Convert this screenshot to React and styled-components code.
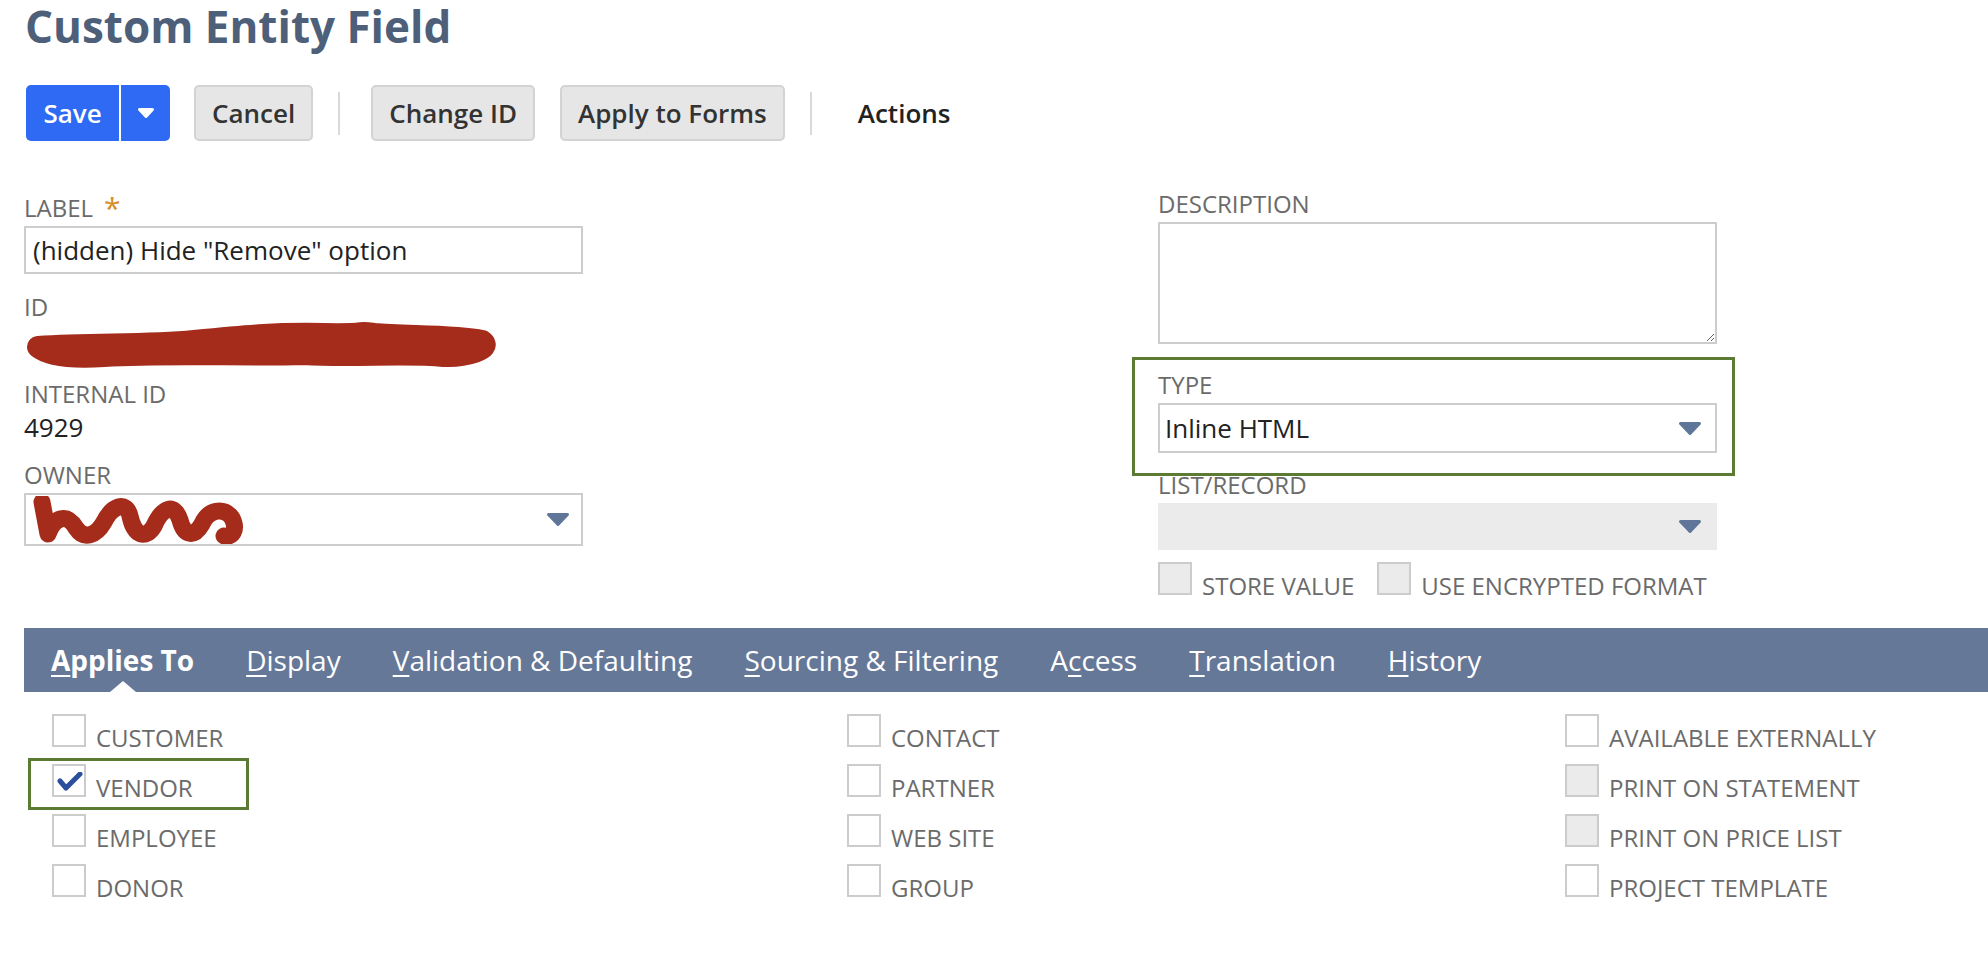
import React from "react";
import styled, { createGlobalStyle } from "styled-components";

const GlobalStyle = createGlobalStyle`
  html, body {
    margin: 0;
    padding: 0;
    background: #fff;
  }
  body {
    font-family: "Open Sans", "Liberation Sans", sans-serif;
    color: #262626;
  }
`;

const Page = styled.div`
  width: 1988px;
  box-sizing: border-box;
  padding-left: 24px;
  padding-bottom: 40px;
`;

const Title = styled.h1`
  margin: 0;
  padding-left: 1px;
  font-size: 44px;
  line-height: 52px;
  font-weight: 700;
  color: #4d5f79;
`;

const Toolbar = styled.div`
  display: flex;
  align-items: center;
  margin-top: 33px;
  padding-left: 2px;
  height: 56px;
`;

const SplitButton = styled.div`
  display: flex;
  height: 56px;
  border-radius: 5px;
  background: #2e6af3;
  color: #fff;
  overflow: hidden;
  margin-right: 24px;
`;

const SplitMain = styled.div`
  width: 93px;
  display: flex;
  align-items: center;
  justify-content: center;
  font-size: 26px;
  font-weight: 600;
`;

const SplitCaret = styled.div`
  width: 49px;
  border-left: 2px solid #fff;
  display: flex;
  align-items: center;
  justify-content: center;
`;

const GrayButton = styled.div`
  height: 56px;
  box-sizing: border-box;
  padding: 0 16px;
  display: flex;
  align-items: center;
  background: #e6e6e6;
  border: 2px solid #d3d3d3;
  border-radius: 5px;
  font-size: 26px;
  font-weight: 600;
  color: #333;
  margin-right: 25px;
`;

const Divider = styled.div`
  width: 2px;
  height: 43px;
  background: #d9d9d9;
  margin-right: ${(p) => p.$mr}px;
`;

const TextAction = styled.div`
  font-size: 26px;
  font-weight: 600;
  color: #222;
`;

const Form = styled.div`
  display: grid;
  grid-template-columns: 559px 559px;
  column-gap: 575px;
  margin-top: 48px;
`;

const Column = styled.div`
  display: flex;
  flex-direction: column;
  padding-top: ${(p) => p.$pt || 0}px;
`;

const Field = styled.div`
  position: relative;
  margin-bottom: ${(p) => (p.$mb === undefined ? 18 : p.$mb)}px;
`;

const Label = styled.div`
  font-size: 24px;
  line-height: 30px;
  color: #6b6b6b;
  margin-bottom: 3px;
  white-space: nowrap;
`;

const Required = styled.span`
  color: #d88d25;
  font-size: 30px;
  line-height: 20px;
  margin-left: 11px;
  position: relative;
  top: 2px;
`;

const TextInput = styled.div`
  height: 48px;
  box-sizing: border-box;
  border: 2px solid #cdcdcd;
  padding: 0 7px;
  display: flex;
  align-items: center;
  font-size: 26px;
  color: #222;
`;

const Value = styled.div`
  font-size: 26px;
  line-height: 30px;
  color: #222;
`;

const Redacted = styled.div`
  height: 42px;
  svg {
    display: block;
    margin-top: -6px;
  }
`;

const Select = styled.div`
  height: ${(p) => p.$h || 50}px;
  box-sizing: border-box;
  border: 2px solid ${(p) => (p.$disabled ? "#ebebeb" : "#cdcdcd")};
  background: ${(p) => (p.$disabled ? "#ebebeb" : "#fff")};
  padding: 0 ${(p) => p.$pr || 12}px 0 5px;
  display: flex;
  align-items: center;
  justify-content: space-between;
  font-size: 26px;
  color: #222;
  position: relative;
  overflow: hidden;
`;

const OwnerScribble = styled.svg`
  position: absolute;
  left: 6px;
  top: 1px;
`;

const TextArea = styled.textarea`
  display: block;
  width: 559px;
  height: 122px;
  box-sizing: border-box;
  border: 2px solid #cdcdcd;
  border-radius: 0;
  resize: both;
  font-family: inherit;
  font-size: 24px;
  outline: none;
`;

const Annotation = styled.div`
  position: absolute;
  left: ${(p) => p.$l}px;
  top: ${(p) => p.$t}px;
  right: ${(p) => p.$r}px;
  bottom: ${(p) => p.$b}px;
  border: 3px solid #5b7b35;
  pointer-events: none;
`;

const InlineChecks = styled.div`
  display: flex;
  gap: 23px;
  margin-top: 12px;
`;

const CheckItem = styled.div`
  position: relative;
  align-self: flex-start;
  display: flex;
  align-items: flex-end;
  gap: 10px;
  height: 33px;
`;

const Box = styled.div`
  width: 34px;
  height: 33px;
  box-sizing: border-box;
  border: 2px solid #cccccc;
  background: ${(p) => (p.$disabled ? "#ebebeb" : "#fff")};
  position: relative;
  flex-shrink: 0;
  svg {
    position: absolute;
    left: 3px;
    top: 6px;
  }
`;

const CheckText = styled.span`
  font-size: 24px;
  line-height: 24px;
  color: #6b6b6b;
  margin-bottom: -3px;
  white-space: nowrap;
`;

const TabBar = styled.div`
  display: flex;
  align-items: center;
  gap: 52px;
  height: 64px;
  margin-top: 33px;
  padding-left: 27px;
  background: #667898;
`;

const Tab = styled.div`
  position: relative;
  height: 64px;
  display: flex;
  align-items: center;
  font-size: 28px;
  font-weight: ${(p) => (p.$active ? 700 : 400)};
  color: #fff;
  white-space: nowrap;
  u {
    text-decoration-thickness: 2px;
    text-underline-offset: 4px;
  }
`;

const TabArrow = styled.div`
  position: absolute;
  bottom: 0;
  left: 50%;
  margin-left: -13px;
  width: 0;
  height: 0;
  border-left: 13px solid transparent;
  border-right: 13px solid transparent;
  border-bottom: 11px solid #fff;
`;

const CheckGrid = styled.div`
  display: grid;
  grid-template-columns: 795px 718px 1fr;
  padding: 22px 0 0 28px;
`;

const CheckColumn = styled.div`
  display: flex;
  flex-direction: column;
  gap: 17px;
`;

const Caret = ({ color = "#5f7699", w = 22, h = 13 }) => (
  <svg width={w} height={h} viewBox={`0 0 ${w} ${h}`}>
    <polygon
      points={`1.5,1.5 ${w - 1.5},1.5 ${w / 2},${h - 1.5}`}
      fill={color}
      stroke={color}
      strokeWidth="3"
      strokeLinejoin="round"
    />
  </svg>
);

const Tick = () => (
  <svg width="26" height="20" viewBox="0 0 26 20">
    <path
      d="M3 9 L9 16 L23 2"
      fill="none"
      stroke="#2b4f9c"
      strokeWidth="5"
      strokeLinecap="round"
      strokeLinejoin="round"
    />
  </svg>
);

const Check = ({ label, checked, disabled, highlight }) => (
  <CheckItem>
    <Box $disabled={disabled}>{checked && <Tick />}</Box>
    <CheckText>{label}</CheckText>
    {highlight && <Annotation $l={-24} $t={-6} $r={-56} $b={-13} />}
  </CheckItem>
);

const tabs = [
  { key: "A", rest: "pplies To", active: true },
  { key: "D", rest: "isplay" },
  { key: "V", rest: "alidation & Defaulting" },
  { key: "S", rest: "ourcing & Filtering" },
  { pre: "A", key: "c", rest: "cess" },
  { key: "T", rest: "ranslation" },
  { key: "H", rest: "istory" },
];

const columns = [
  [
    { label: "CUSTOMER" },
    { label: "VENDOR", checked: true, highlight: true },
    { label: "EMPLOYEE" },
    { label: "DONOR" },
  ],
  [{ label: "CONTACT" }, { label: "PARTNER" }, { label: "WEB SITE" }, { label: "GROUP" }],
  [
    { label: "AVAILABLE EXTERNALLY" },
    { label: "PRINT ON STATEMENT", disabled: true },
    { label: "PRINT ON PRICE LIST", disabled: true },
    { label: "PROJECT TEMPLATE" },
  ],
];

const App = () => {
  return (
    <Page>
      <GlobalStyle />
      <Title>Custom Entity Field</Title>

      <Toolbar>
        <SplitButton>
          <SplitMain>Save</SplitMain>
          <SplitCaret>
            <Caret color="#fff" w={16} h={10} />
          </SplitCaret>
        </SplitButton>
        <GrayButton>Cancel</GrayButton>
        <Divider $mr={31} />
        <GrayButton>Change ID</GrayButton>
        <GrayButton>Apply to Forms</GrayButton>
        <Divider $mr={46} />
        <TextAction>Actions</TextAction>
      </Toolbar>

      <Form>
        <Column $pt={4}>
          <Field>
            <Label>
              LABEL<Required>*</Required>
            </Label>
            <TextInput>(hidden) Hide "Remove" option</TextInput>
          </Field>
          <Field>
            <Label>ID</Label>
            <Redacted>
              <svg width="480" height="52" viewBox="0 0 480 52">
                <path
                  d="M14 28 C 70 24, 120 27, 170 22 S 250 14, 300 15 S 330 12, 350 15 C 380 18, 430 16, 458 22 C 470 30, 440 38, 420 37 C 380 33, 330 38, 280 35 C 220 37, 150 33, 80 37 C 50 39, 25 37, 14 28 Z"
                  fill="#a52b1b"
                  stroke="#a52b1b"
                  strokeWidth="22"
                  strokeLinejoin="round"
                />
              </svg>
            </Redacted>
          </Field>
          <Field>
            <Label>INTERNAL ID</Label>
            <Value>4929</Value>
          </Field>
          <Field>
            <Label>OWNER</Label>
            <Select $h={53}>
              <span />
              <OwnerScribble width="220" height="50" viewBox="0 0 220 50">
                <path
                  d="M10 6 L16 38 C 22 22, 34 16, 44 32 C 52 44, 64 40, 72 26 C 80 10, 94 4, 98 20 C 102 40, 114 44, 122 30 C 130 12, 142 6, 148 24 C 152 40, 162 42, 170 28 C 176 14, 192 10, 200 22 C 206 34, 200 42, 192 40"
                  fill="none"
                  stroke="#a52b1b"
                  strokeWidth="17"
                  strokeLinecap="round"
                  strokeLinejoin="round"
                />
              </OwnerScribble>
              <Caret />
            </Select>
          </Field>
        </Column>

        <Column>
          <Field $mb={26}>
            <Label>DESCRIPTION</Label>
            <TextArea />
          </Field>
          <Field $mb={17}>
            <Label>TYPE</Label>
            <Select $pr={14}>
              <span>Inline HTML</span>
              <Caret />
            </Select>
            <Annotation $l={-26} $t={-13} $r={-18} $b={-23} />
          </Field>
          <Field $mb={0}>
            <Label>LIST/RECORD</Label>
            <Select $h={47} $pr={14} $disabled>
              <span />
              <Caret />
            </Select>
          </Field>
          <InlineChecks>
            <Check label="STORE VALUE" disabled />
            <Check label="USE ENCRYPTED FORMAT" disabled />
          </InlineChecks>
        </Column>
      </Form>

      <TabBar>
        {tabs.map((t) => (
          <Tab key={t.rest} $active={t.active}>
            {t.pre}
            <u>{t.key}</u>
            {t.rest}
            {t.active && <TabArrow />}
          </Tab>
        ))}
      </TabBar>

      <CheckGrid>
        {columns.map((col, i) => (
          <CheckColumn key={i}>
            {col.map((c) => (
              <Check key={c.label} {...c} />
            ))}
          </CheckColumn>
        ))}
      </CheckGrid>
    </Page>
  );
};

export default App;
